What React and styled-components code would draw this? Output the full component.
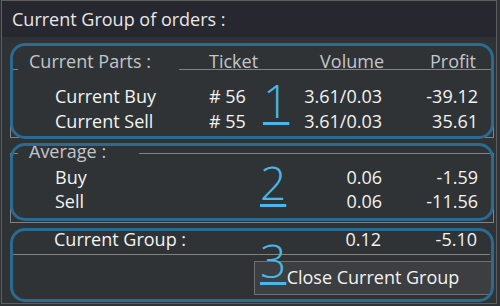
import React from "react";
import styled, { createGlobalStyle } from "styled-components";

const Global = createGlobalStyle`
  html, body { margin: 0; padding: 0; background: #2f3336; }
  body { width: 500px; height: 306px; overflow: hidden; font-family: "Open Sans", "Noto Sans", sans-serif; }
  * { box-sizing: border-box; }
`;

const Window = styled.div`
  position: relative;
  margin-left: 1px;
  width: 496px;
  height: 304px;
  border: 1px solid #5e5e5e;
  background: #2f3336;
  display: flex;
  flex-direction: column;
`;

const Header = styled.div`
  height: 36px;
  line-height: 36px;
  padding-left: 10px;
  background: #27272f;
  color: #e8e8e8;
  font-size: 18px;
`;

const Body = styled.div`
  padding: 32px 0 0 8px;
  display: flex;
  flex-direction: column;
`;

const Group = styled.div`
  width: 484px;
  margin-top: ${(p) => p.$mt || 0}px;
  border: 1px solid #828282;
  padding-bottom: ${(p) => p.$pb || 0}px;
`;

const HeadRow = styled.div`
  display: grid;
  grid-template-columns: 7px 161px 30px 80px 95px 92px;
  height: 18px;
  line-height: 18px;
  margin-top: -18px;
  font-size: 18px;
  color: #c3c6ca;
`;

const Legend = styled.div`
  grid-column: ${(p) => p.$col || "auto"};
  background: #2f3336;
  padding-left: 11px;
  height: ${(p) => p.$h || 18}px;
  line-height: ${(p) => p.$h || 18}px;
  width: ${(p) => p.$w}px;
  white-space: nowrap;
`;

const LegendRow = styled.div`
  padding-left: 7px;
  margin-top: -13px;
  font-size: 18px;
  color: #c3c6ca;
`;

const ColHead = styled.div`
  grid-column: ${(p) => p.$col || "auto"};
  text-align: ${(p) => (p.$right ? "right" : "left")};
  white-space: nowrap;
`;

const Rows = styled.div`
  padding-top: ${(p) => p.$pt || 0}px;
`;

const Row = styled.div`
  display: grid;
  grid-template-columns: 44px 154px 80px 93px 96px;
  height: ${(p) => p.$h || 25}px;
  line-height: ${(p) => p.$h || 25}px;
  font-size: 18px;
  color: #f3f3f1;
`;

const Cell = styled.div`
  grid-column: ${(p) => p.$col || "auto"};
  text-align: ${(p) => (p.$right ? "right" : "left")};
  white-space: nowrap;
`;

const Plain = styled.div`
  width: 484px;
  margin-top: ${(p) => p.$mt || 0}px;
  display: flex;
  flex-direction: column;
`;

const Separator = styled.div`
  height: 1px;
  margin: 3px 4px 0 2px;
  background: #828282;
`;

const Footer = styled.div`
  display: flex;
  justify-content: flex-end;
  padding-right: 2px;
  margin-top: 6px;
`;

const Button = styled.button`
  width: 238px;
  height: 34px;
  background: #3c3e41;
  border: 1px solid #6f6f6f;
  color: #f3f3f1;
  font-family: "Open Sans", "Noto Sans", sans-serif;
  font-size: 18px;
  padding: 0 0 2px 0;
  margin: 0;
`;

const Highlight = styled.div`
  position: absolute;
  left: 8px;
  top: ${(p) => p.$top}px;
  width: 484px;
  height: ${(p) => p.$h}px;
  border: 3px solid #2b6a91;
  border-radius: 15px;
  pointer-events: none;
`;

const Marker = styled.div`
  position: absolute;
  left: ${(p) => p.$left}px;
  top: ${(p) => p.$top}px;
  font-family: "Open Sans", sans-serif;
  font-weight: 350;
  font-size: 46px;
  line-height: 46px;
  color: #4bb6ea;
  text-decoration: underline;
  text-decoration-thickness: 3px;
  text-underline-offset: 4px;
  pointer-events: none;
`;

export default function App() {
  return (
    <>
      <Global />
      <Window>
        <Header>Current Group of orders :</Header>
        <Body>
          <Group $pb={3}>
            <HeadRow>
              <Legend $col="2" $w={161}>Current Parts :</Legend>
              <ColHead $col="4">Ticket</ColHead>
              <ColHead $right>Volume</ColHead>
              <ColHead $right>Profit</ColHead>
            </HeadRow>
            <Rows $pt={14}>
              <Row>
                <Cell $col="2">Current Buy</Cell>
                <Cell># 56</Cell>
                <Cell $right>3.61/0.03</Cell>
                <Cell $right>-39.12</Cell>
              </Row>
              <Row>
                <Cell $col="2">Current Sell</Cell>
                <Cell># 55</Cell>
                <Cell $right>3.61/0.03</Cell>
                <Cell $right>35.61</Cell>
              </Row>
            </Rows>
          </Group>
          <Group $mt={15} $pb={9}>
            <LegendRow>
              <Legend $w={121} $h={20}>Average :</Legend>
            </LegendRow>
            <Rows $pt={4}>
              <Row $h={24}>
                <Cell $col="2">Buy</Cell>
                <Cell />
                <Cell $right>0.06</Cell>
                <Cell $right>-1.59</Cell>
              </Row>
              <Row $h={24}>
                <Cell $col="2">Sell</Cell>
                <Cell />
                <Cell $right>0.06</Cell>
                <Cell $right>-11.56</Cell>
              </Row>
            </Rows>
          </Group>
          <Plain $mt={4}>
            <Row $h={24}>
              <Cell $col="2">Current Group :</Cell>
              <Cell />
              <Cell $right>0.12</Cell>
              <Cell $right>-5.10</Cell>
            </Row>
            <Separator />
            <Footer>
              <Button>Close Current Group</Button>
            </Footer>
          </Plain>
        </Body>
        <Highlight $top={42} $h={96} />
        <Highlight $top={142} $h={78} />
        <Highlight $top={227} $h={74} />
        <Marker $left={261} $top={76}>1</Marker>
        <Marker $left={258} $top={158}>2</Marker>
        <Marker $left={258} $top={236}>3</Marker>
      </Window>
    </>
  );
}
